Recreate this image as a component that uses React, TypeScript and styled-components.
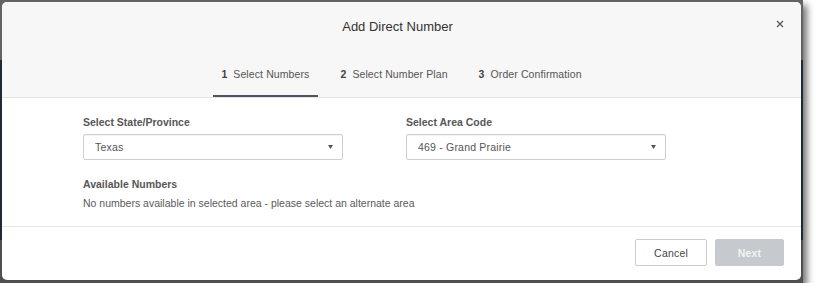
import styled, { createGlobalStyle } from 'styled-components';

const GlobalStyle = createGlobalStyle`
  html, body {
    margin: 0;
    padding: 0;
    background: #ffffff;
  }
  body {
    font-family: 'Liberation Sans', Arial, sans-serif;
  }
`;

type Tab = { num: number; label: string; active?: boolean };

const tabs: Tab[] = [
  { num: 1, label: 'Select Numbers', active: true },
  { num: 2, label: 'Select Number Plan' },
  { num: 3, label: 'Order Confirmation' },
];

const CloseIcon = () => (
  <svg width="8" height="8" viewBox="0 0 8 8">
    <path d="M1 1 L7 7 M7 1 L1 7" stroke="#555" strokeWidth="1.2" />
  </svg>
);

const Caret = () => (
  <svg width="5" height="4" viewBox="0 0 5 4">
    <path d="M0 0 H5 L2.5 4 Z" fill="#555" />
  </svg>
);

const SelectField = ({ label, value }: { label: string; value: string }) => (
  <Field>
    <FieldLabel>{label}</FieldLabel>
    <SelectBox>
      <span>{value}</span>
      <Caret />
    </SelectBox>
  </Field>
);

const App = () => {
  return (
    <>
      <GlobalStyle />
      <Frame>
        <Modal>
          <Header>
            <TitleRow>
              <Title>Add Direct Number</Title>
              <CloseButton>
                <CloseIcon />
              </CloseButton>
            </TitleRow>
            <Tabs>
              {tabs.map((tab) => (
                <TabItem key={tab.num} active={tab.active}>
                  <TabNum>{tab.num}</TabNum>
                  {tab.label}
                </TabItem>
              ))}
            </Tabs>
          </Header>
          <Body>
            <Columns>
              <SelectField label="Select State/Province" value="Texas" />
              <SelectField label="Select Area Code" value="469 - Grand Prairie" />
            </Columns>
            <Section>
              <FieldLabel>Available Numbers</FieldLabel>
              <Message>
                No numbers available in selected area - please select an alternate area
              </Message>
            </Section>
          </Body>
          <Footer>
            <Button>Cancel</Button>
            <Button variant="disabled">Next</Button>
          </Footer>
        </Modal>
      </Frame>
    </>
  );
};

const Frame = styled.div`
  width: 803px;
  height: 283px;
  box-sizing: border-box;
  padding: 2px 2px 3px 2px;
  background: linear-gradient(
    to bottom,
    #636363 0,
    #636363 60px,
    #1f2a36 60px,
    #1f2a36 240px,
    #4f4f4f 240px
  );
  box-shadow: 4px 5px 7px rgba(0, 0, 0, 0.55);
`;

const Modal = styled.div`
  height: 100%;
  background: #ffffff;
  border-radius: 5px;
  overflow: hidden;
  display: flex;
  flex-direction: column;
`;

const Header = styled.div`
  background: #f7f7f7;
  border-bottom: 1px solid #e3e3e3;
  padding-top: 17px;
  display: flex;
  flex-direction: column;
  align-items: center;
`;

const TitleRow = styled.div`
  position: relative;
  align-self: stretch;
  display: flex;
  justify-content: center;
`;

const Title = styled.div`
  font-size: 13px;
  line-height: 16px;
  color: #333;
  margin-right: 8px;
`;

const CloseButton = styled.div`
  position: absolute;
  right: 17px;
  top: 1px;
  display: flex;
`;

const Tabs = styled.div`
  display: flex;
  gap: 14px;
  margin-top: 32px;
`;

const TabItem = styled.div<{ active?: boolean }>`
  font-size: 10.5px;
  line-height: 14px;
  color: #555;
  padding: 0 8.5px 14px;
  letter-spacing: 0.1px;
  border-bottom: 2px solid ${({ active }) => (active ? '#4b5661' : 'transparent')};
`;

const TabNum = styled.span`
  font-weight: bold;
  color: #444;
  margin-right: 6px;
`;

const Body = styled.div`
  padding: 17px 81px 16px;
  border-bottom: 1px solid #e6e6e6;
`;

const Columns = styled.div`
  display: grid;
  grid-template-columns: 260px 260px;
  column-gap: 63px;
`;

const Field = styled.div`
  display: flex;
  flex-direction: column;
  gap: 5px;
`;

const FieldLabel = styled.div`
  font-size: 10.5px;
  line-height: 14px;
  font-weight: bold;
  color: #575757;
`;

const SelectBox = styled.div`
  height: 26px;
  box-sizing: border-box;
  border: 1px solid #cfcfcf;
  border-radius: 2px;
  box-shadow: inset 0 1px 1px rgba(0, 0, 0, 0.05);
  display: flex;
  align-items: center;
  justify-content: space-between;
  padding: 0 9px 0 11px;
  font-size: 10.5px;
  color: #555;
  letter-spacing: 0.2px;
`;

const Section = styled.div`
  margin-top: 17px;
  display: flex;
  flex-direction: column;
  gap: 5px;
`;

const Message = styled.div`
  font-size: 10.5px;
  line-height: 14px;
  color: #5a5a5a;
`;

const Footer = styled.div`
  flex: 1;
  display: flex;
  justify-content: flex-end;
  align-items: flex-start;
  gap: 8px;
  padding: 12px 17px 0 0;
`;

const Button = styled.div<{ variant?: 'default' | 'disabled' }>`
  height: 27px;
  box-sizing: border-box;
  padding: 0 18px;
  min-width: 69px;
  display: flex;
  align-items: center;
  justify-content: center;
  font-size: 10.5px;
  letter-spacing: 0.2px;
  border-radius: 2px;
  border: 1px solid ${({ variant }) => (variant === 'disabled' ? '#c6c9cd' : '#cccccc')};
  background: ${({ variant }) => (variant === 'disabled' ? '#c6c9cd' : '#ffffff')};
  color: ${({ variant }) => (variant === 'disabled' ? '#f4f4f4' : '#444')};
  font-weight: ${({ variant }) => (variant === 'disabled' ? 'bold' : 'normal')};
`;

export default App;
